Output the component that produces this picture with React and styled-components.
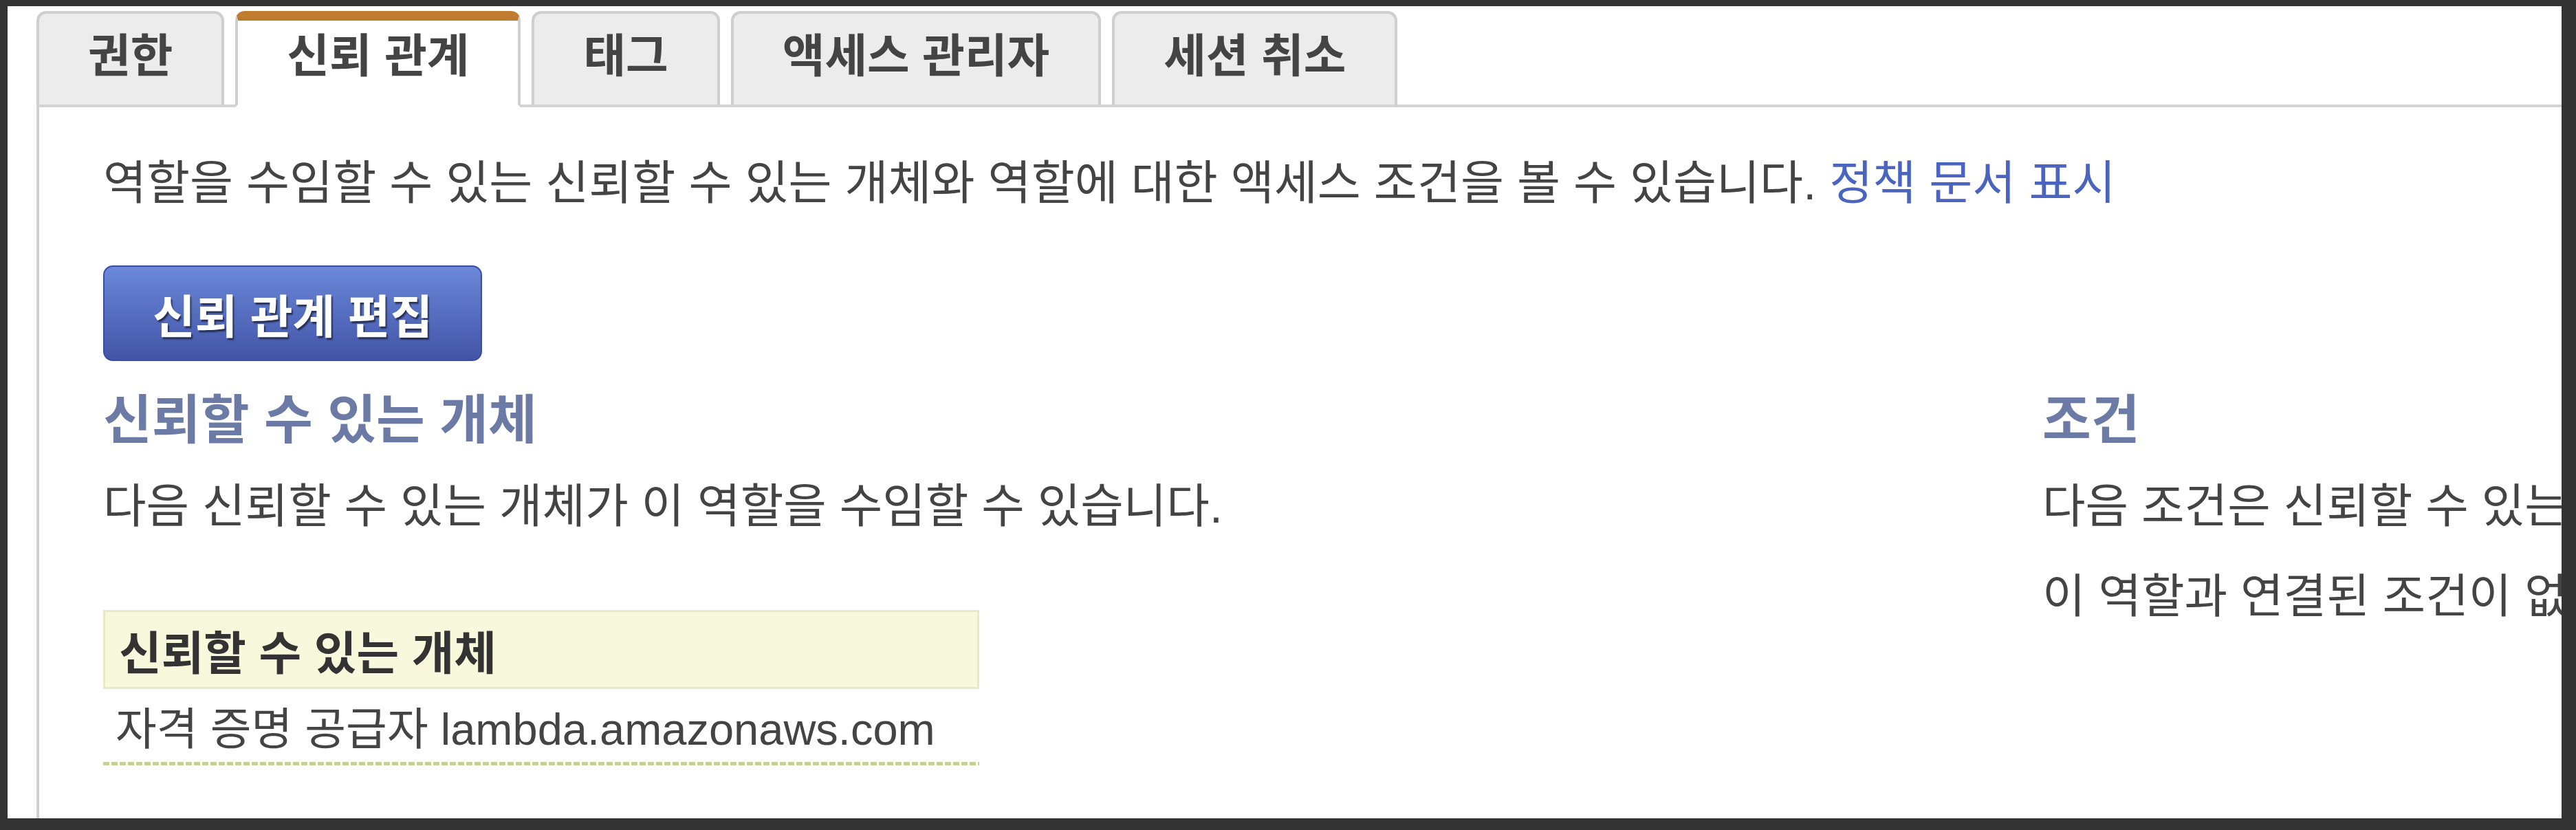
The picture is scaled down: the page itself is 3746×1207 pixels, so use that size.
import React from 'react';
import styled, { createGlobalStyle } from 'styled-components';

const GlobalStyle = createGlobalStyle`
    * {
        margin: 0;
        padding: 0;
        box-sizing: border-box;
    }

    body {
        background: #333;
        font-family: "Liberation Sans", "Noto Sans CJK KR", sans-serif;
        color: #444;
    }
`;

const Frame = styled.div`
    width: 3746px;
    height: 1207px;
    padding: 9px 21px 17px 11px;
`;

const Page = styled.div`
    height: 100%;
    background: #fff;
    overflow: hidden;
    padding: 7px 0 0 42px;
    display: flex;
    flex-direction: column;
`;

const TabBar = styled.div`
    display: flex;
    align-items: flex-end;
    gap: 16px;
    border-bottom: 4px solid #d3d3d3;
`;

const Tab = styled.div`
    height: 140px;
    margin-bottom: -4px;
    padding: 0 71px ${p => (p.$active ? '18px' : '8px')};
    display: flex;
    align-items: center;
    justify-content: center;
    background: ${p => (p.$active ? '#fff' : '#ececec')};
    border: 4px solid #cfcfcf;
    border-top: ${p => (p.$active ? '14px solid #c07c2e' : '4px solid #cfcfcf')};
    border-bottom: 4px solid ${p => (p.$active ? '#fff' : '#d3d3d3')};
    border-radius: 14px 14px 0 0;
    font-size: 67px;
    font-weight: bold;
    line-height: 80px;
    color: #444;
    white-space: nowrap;
`;

const Panel = styled.div`
    flex: 1;
    border-left: 4px solid #d0d0d0;
    padding: 68px 0 0 93px;
`;

const Intro = styled.p`
    font-size: 68.5px;
    line-height: 86px;
    white-space: nowrap;
`;

const Link = styled.a`
    color: #4a64c0;
    text-decoration: none;
`;

const EditButton = styled.button`
    margin-top: 76px;
    height: 139px;
    padding: 0 70px;
    display: flex;
    align-items: center;
    border: 2px solid #3d4d9e;
    border-radius: 14px;
    background: linear-gradient(#6b88d9, #4254a6);
    color: #fff;
    font-family: inherit;
    font-size: 67px;
    font-weight: bold;
    text-shadow: 2px 3px 2px rgba(0, 0, 0, 0.55);
    white-space: nowrap;
`;

const Columns = styled.div`
    margin-top: 41px;
    display: grid;
    grid-template-columns: 2820px 1600px;
`;

const Column = styled.section`
    white-space: nowrap;
`;

const Heading = styled.h3`
    font-size: 77px;
    line-height: 90px;
    font-weight: bold;
    color: #6c7ba6;
`;

const Text = styled.p`
    margin-top: ${p => p.$gap || 37}px;
    font-size: 68px;
    line-height: 86px;
`;

const Table = styled.div`
    margin-top: 108px;
    width: 1274px;
`;

const HeaderCell = styled.div`
    height: 115px;
    padding-left: 20px;
    display: flex;
    align-items: center;
    background: #f7f8dc;
    border: 3px solid #e6eac6;
    font-size: 67px;
    font-weight: bold;
    color: #333;
`;

const RowCell = styled.div`
    height: 111px;
    padding: 0 0 5px 18px;
    display: flex;
    align-items: center;
    font-size: 65px;
    background: repeating-linear-gradient(90deg, #c9cd96 0 9px, transparent 9px 12px) bottom / 100% 5px no-repeat;
`;

const tabs = ['권한', '신뢰 관계', '태그', '액세스 관리자', '세션 취소'];

const App = () => {
    return (
        <Frame>
            <GlobalStyle />
            <Page>
                <TabBar>
                    {tabs.map(t => (
                        <Tab key={t} $active={t === '신뢰 관계'}>{t}</Tab>
                    ))}
                </TabBar>
                <Panel>
                    <Intro>
                        역할을 수임할 수 있는 신뢰할 수 있는 개체와 역할에 대한 액세스 조건을 볼 수 있습니다.{' '}
                        <Link href="#">정책 문서 표시</Link>
                    </Intro>
                    <EditButton>신뢰 관계 편집</EditButton>
                    <Columns>
                        <Column>
                            <Heading>신뢰할 수 있는 개체</Heading>
                            <Text>다음 신뢰할 수 있는 개체가 이 역할을 수임할 수 있습니다.</Text>
                            <Table>
                                <HeaderCell>신뢰할 수 있는 개체</HeaderCell>
                                <RowCell>자격 증명 공급자 lambda.amazonaws.com</RowCell>
                            </Table>
                        </Column>
                        <Column>
                            <Heading>조건</Heading>
                            <Text>다음 조건은 신뢰할 수 있는 개체가 역할을 수임할 수 있는 시기를 정의합니다.</Text>
                            <Text $gap={45}>이 역할과 연결된 조건이 없습니다.</Text>
                        </Column>
                    </Columns>
                </Panel>
            </Page>
        </Frame>
    );
};

export default App;
